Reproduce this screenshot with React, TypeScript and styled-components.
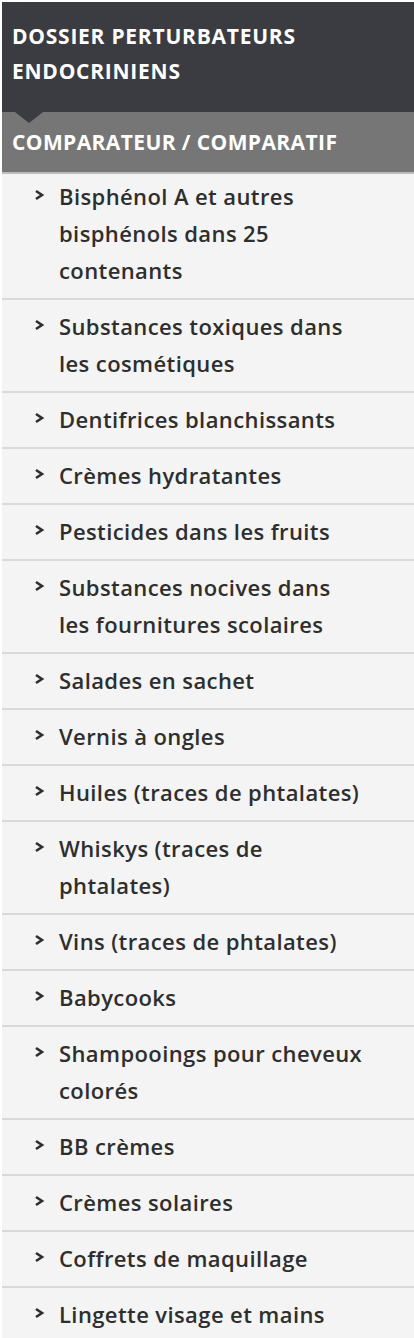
import React from "react";
import styled, { createGlobalStyle } from "styled-components";

const GlobalStyle = createGlobalStyle`
  html, body { margin: 0; padding: 0; background: #ffffff; }
  * { box-sizing: border-box; }
`;

const Panel = styled.nav`
  width: 414px;
  min-height: 1338px;
  padding: 2px 0 0 2px;
  background: #ffffff;
  font-family: "Open Sans", Lato, "Liberation Sans", sans-serif;
`;

const Inner = styled.div`
  background: #f4f4f4;
  min-height: 1336px;
`;

const DossierHeader = styled.div`
  position: relative;
  background: #3a3c42;
  color: #ffffff;
  font-weight: 700;
  font-size: 21px;
  letter-spacing: 0.75px;
  line-height: 35px;
  text-transform: uppercase;
  padding: 17px 10px 23px 10px;
  height: 110px;
`;

const Pointer = styled.span`
  position: absolute;
  left: 13px;
  bottom: -11px;
  width: 0;
  height: 0;
  border-left: 14px solid transparent;
  border-right: 14px solid transparent;
  border-top: 11px solid #3a3c42;
`;

const SectionHeader = styled.div`
  background: #767676;
  color: #ffffff;
  font-weight: 700;
  font-size: 21px;
  letter-spacing: 0.4px;
  line-height: 60px;
  height: 62px;
  padding: 0 10px;
  text-transform: uppercase;
  border-bottom: 2px solid #bdbdbd;
`;

const List = styled.ul`
  list-style: none;
  margin: 0;
  padding: 0;
`;

const Item = styled.li<{ $first?: boolean }>`
  display: flex;
  align-items: flex-start;
  padding: ${(p) => (p.$first ? "4px" : "8px")} 50px 9px 31px;
  border-bottom: 2px solid #d9d9d9;
  color: #2e2e2e;
  font-weight: 600;
  font-size: 22px;
  letter-spacing: 0.4px;
  line-height: 37px;
`;

const Chevron = styled.svg`
  flex: 0 0 auto;
  width: 12px;
  height: 12px;
  margin: 11px 14px 0 0;
`;

const Label = styled.span`
  flex: 1 1 auto;
`;

const items = [
  "Bisphénol A et autres bisphénols dans 25 contenants",
  "Substances toxiques dans les cosmétiques",
  "Dentifrices blanchissants",
  "Crèmes hydratantes",
  "Pesticides dans les fruits",
  "Substances nocives dans les fournitures scolaires",
  "Salades en sachet",
  "Vernis à ongles",
  "Huiles (traces de phtalates)",
  "Whiskys (traces de phtalates)",
  "Vins (traces de phtalates)",
  "Babycooks",
  "Shampooings pour cheveux colorés",
  "BB crèmes",
  "Crèmes solaires",
  "Coffrets de maquillage",
  "Lingette visage et mains",
];

export default function App() {
  return (
    <>
      <GlobalStyle />
      <Panel>
        <Inner>
          <DossierHeader>
            Dossier perturbateurs
            <br />
            endocriniens
            <Pointer />
          </DossierHeader>
          <SectionHeader>Comparateur / comparatif</SectionHeader>
          <List>
            {items.map((t, i) => (
              <Item key={t} $first={i === 0}>
                <Chevron viewBox="0 0 12 12">
                  <path d="M3 2 L9 6 L3 10" fill="none" stroke="#2e2e2e" strokeWidth="2.6" strokeLinecap="butt" strokeLinejoin="miter" />
                </Chevron>
                <Label>{t}</Label>
              </Item>
            ))}
          </List>
        </Inner>
      </Panel>
    </>
  );
}
